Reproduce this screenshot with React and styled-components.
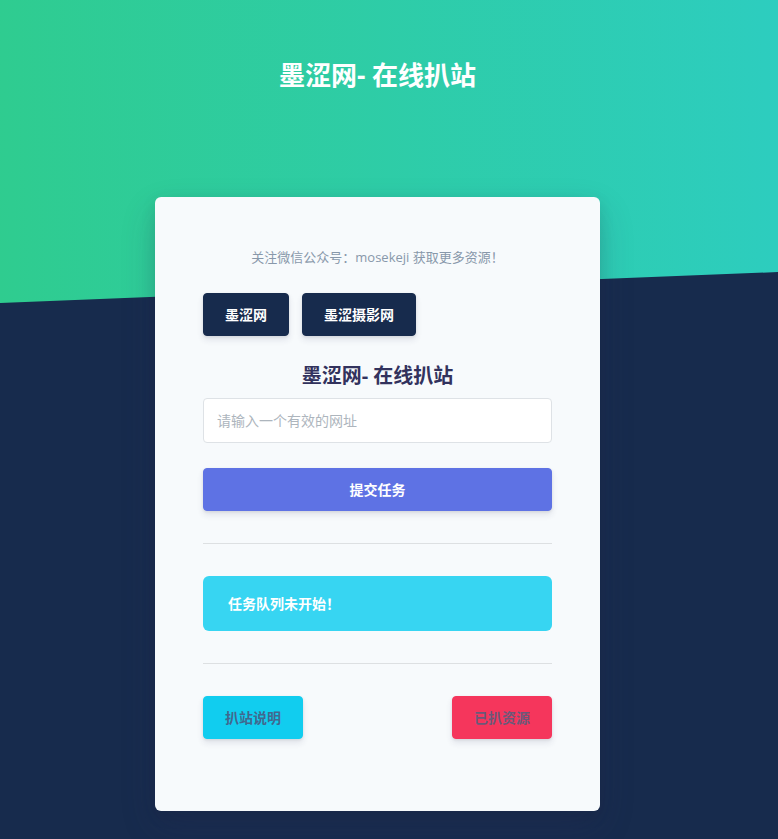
import React from "react";
import styled, { createGlobalStyle } from "styled-components";

const GlobalStyle = createGlobalStyle`
  * { box-sizing: border-box; }
  body {
    margin: 0;
    background: #172b4d;
    font-family: "Open Sans", "Noto Sans CJK SC", sans-serif;
    color: #525f7f;
  }
`;

const Page = styled.div`
  position: relative;
  min-height: 839px;
  padding: 57px 23px 0 0;
  overflow: hidden;
`;

// slanted green header shape behind the content
const Shape = styled.div`
  position: absolute;
  inset: 0 0 auto 0;
  height: 310px;
  background: linear-gradient(87deg, #2fcc8f 0, #2dcdbf 100%);
  clip-path: polygon(0 0, 100% 0, 100% 272px, 0 303px);
  z-index: 0;
`;

const Content = styled.div`
  position: relative;
  z-index: 1;
  display: flex;
  flex-direction: column;
  align-items: center;
`;

const Title = styled.h1`
  margin: 0;
  font-size: 26px;
  line-height: 36px;
  font-weight: 700;
  color: #fff;
`;

const Card = styled.div`
  margin-top: 104px;
  width: 445px;
  background: #f7fafc;
  border-radius: 6px;
  box-shadow: 0 15px 35px rgba(50, 50, 93, 0.2), 0 5px 15px rgba(0, 0, 0, 0.1);
  padding: 50px 48px 72px;
  display: flex;
  flex-direction: column;
`;

const Notice = styled.p`
  margin: 0;
  text-align: center;
  font-size: 13px;
  line-height: 20px;
  color: #8898aa;
`;

const LinkRow = styled.div`
  display: flex;
  gap: 13px;
  margin-top: 26px;
`;

const Button = styled.button`
  font-family: inherit;
  font-size: 14px;
  line-height: 21px;
  font-weight: 700;
  padding: 10px 21px;
  border: 1px solid ${(p) => p.$bg};
  border-radius: 4px;
  background: ${(p) => p.$bg};
  color: ${(p) => p.$fg || "#fff"};
  box-shadow: 0 4px 6px rgba(50, 50, 93, 0.11), 0 1px 3px rgba(0, 0, 0, 0.08);
  width: ${(p) => (p.$block ? "100%" : "auto")};
  cursor: pointer;
`;

const Heading = styled.h2`
  margin: 26px 0 0;
  text-align: center;
  font-size: 20px;
  line-height: 28px;
  font-weight: 700;
  color: #32325d;
`;

const Input = styled.input`
  margin-top: 8px;
  width: 100%;
  height: 45px;
  padding: 10px 13px;
  font-family: inherit;
  font-size: 14px;
  color: #8898aa;
  background: #fff;
  border: 1px solid #dee2e6;
  border-radius: 4px;
  outline: none;
  &::placeholder {
    color: #adb5bd;
  }
`;

const SubmitWrap = styled.div`
  margin-top: 25px;
`;

const Rule = styled.hr`
  margin: 32px 0;
  border: 0;
  border-top: 1px solid rgba(0, 0, 0, 0.1);
`;

const Alert = styled.div`
  background: #37d5f2;
  border-radius: 6px;
  padding: 16px 25px;
  font-size: 14px;
  line-height: 23px;
  font-weight: 600;
  color: #fff;
`;

const FooterRow = styled.div`
  display: flex;
  justify-content: space-between;
`;

export default function App() {
  return (
    <>
      <GlobalStyle />
      <Page>
        <Shape />
        <Content>
          <Title>墨涩网- 在线扒站</Title>
          <Card>
            <Notice>关注微信公众号：mosekeji 获取更多资源！</Notice>
            <LinkRow>
              <Button $bg="#172b4d">墨涩网</Button>
              <Button $bg="#172b4d">墨涩摄影网</Button>
            </LinkRow>
            <Heading>墨涩网- 在线扒站</Heading>
            <Input placeholder="请输入一个有效的网址" />
            <SubmitWrap>
              <Button $bg="#5e72e4" $block>
                提交任务
              </Button>
            </SubmitWrap>
            <Rule />
            <Alert>任务队列未开始！</Alert>
            <Rule />
            <FooterRow>
              <Button $bg="#11cdef" $fg="rgba(72, 90, 130, 0.9)">
                扒站说明
              </Button>
              <Button $bg="#f5365c" $fg="rgba(82, 95, 127, 0.85)">
                已扒资源
              </Button>
            </FooterRow>
          </Card>
        </Content>
      </Page>
    </>
  );
}
